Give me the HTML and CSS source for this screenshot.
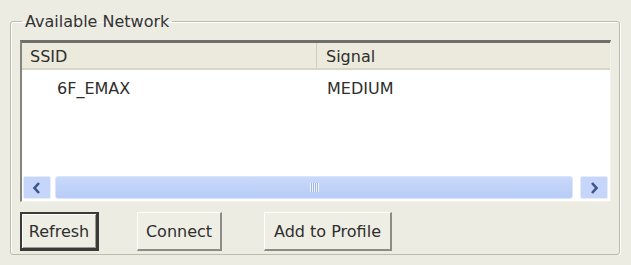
FILE: index.html
```html
<!DOCTYPE html>
<html lang="en">
<head>
  <meta charset="UTF-8">
  <title>Available Network</title>
  <link rel="stylesheet" href="styles.css">
</head>
<body>
  <fieldset class="group">
    <legend>Available Network</legend>

    <div class="list">
      <div class="list-head">
        <div class="col col-ssid">SSID</div>
        <div class="col col-signal">Signal</div>
      </div>
      <div class="list-body">
        <div class="row">
          <div class="cell cell-ssid">6F_EMAX</div>
          <div class="cell cell-signal">MEDIUM</div>
        </div>
      </div>
      <div class="hscroll">
        <div class="sb-btn">
          <svg width="10" height="12" viewBox="0 0 10 12"><path d="M7 1 L2.5 6 L7 11" fill="none" stroke="#3c5488" stroke-width="2.6"/></svg>
        </div>
        <div class="sb-track">
          <div class="sb-thumb"><span class="grip"></span></div>
        </div>
        <div class="sb-btn">
          <svg width="10" height="12" viewBox="0 0 10 12"><path d="M3 1 L7.5 6 L3 11" fill="none" stroke="#3c5488" stroke-width="2.6"/></svg>
        </div>
      </div>
    </div>

    <div class="buttons">
      <button class="btn btn-default">Refresh</button>
      <button class="btn btn-connect">Connect</button>
      <button class="btn btn-profile">Add to Profile</button>
    </div>
  </fieldset>
</body>
</html>
```

FILE: styles.css
```css
body {
  margin: 0;
  background: #edece2;
  font-family: "DejaVu Sans", Tahoma, sans-serif;
  font-size: 16px;
  color: #2e2e2e;
  padding: 12px 11px 0 10px;
}

.group {
  margin: 0;
  border: 1px solid #bdbbac;
  border-radius: 3px;
  box-shadow: inset 1px 1px 0 #fff, 1px 1px 0 #fff;
  padding: 9px 8px 3px 9px;
}

.group legend {
  padding: 0 3px;
  margin-left: 2px;
  color: #333;
}

.list {
  background: #fff;
  border-top: 3px solid #6f6e68;
  border-left: 2px solid #86857d;
  border-right: 1px solid #f4f3ea;
  border-bottom: 1px solid #f4f3ea;
  height: 162px;
  display: flex;
  flex-direction: column;
  box-sizing: border-box;
}

.list-head {
  display: grid;
  grid-template-columns: 295px 1fr;
  background: #ebeadc;
  border-bottom: 2px solid #d9d6c6;
  height: 25px;
}

.col {
  padding: 4px 0 0 8px;
}

.col-ssid {
  border-right: 1px solid #cfcdbf;
}

.col-signal {
  padding-left: 9px;
}

.list-body {
  flex: 1;
}

.row {
  display: grid;
  grid-template-columns: 296px 1fr;
  padding-top: 9px;
}

.cell-ssid {
  padding-left: 35px;
}

.cell-signal {
  padding-left: 9px;
}

.hscroll {
  display: flex;
  gap: 4px;
  height: 23px;
  padding: 0 2px 2px 1px;
}

.sb-btn {
  width: 26px;
  background: #c6d6fa;
  border: 1px solid #e6eefc;
  border-radius: 2px;
  display: flex;
  align-items: center;
  justify-content: center;
}

.sb-track {
  flex: 1;
  display: flex;
}

.sb-thumb {
  flex: 1;
  background: linear-gradient(#c9d9fb, #b7cbf5);
  border: 1px solid #dbe6fc;
  border-radius: 3px;
  display: flex;
  align-items: center;
  justify-content: center;
  margin-right: 3px;
}

.grip {
  width: 9px;
  height: 9px;
  background: repeating-linear-gradient(90deg, #eef3fe 0 1px, #9fb6e6 1px 2px);
}

.buttons {
  display: flex;
  padding-top: 10px;
}

.btn {
  font: inherit;
  color: #2e2e2e;
  background: #efeee4;
  height: 39px;
  border: 1px solid #fff;
  border-right: 2px solid #8d8c84;
  border-bottom: 2px solid #8d8c84;
  padding: 0;
}

.btn-default {
  width: 79px;
  border: 2px solid #3a3a36;
  border-right-width: 3px;
  border-bottom-width: 3px;
  box-shadow: inset 1px 1px 0 #fff, inset -1px -1px 0 #9b9a92;
}

.btn-connect {
  width: 85px;
  margin-left: 38px;
}

.btn-profile {
  width: 128px;
  margin-left: 42px;
}
```
